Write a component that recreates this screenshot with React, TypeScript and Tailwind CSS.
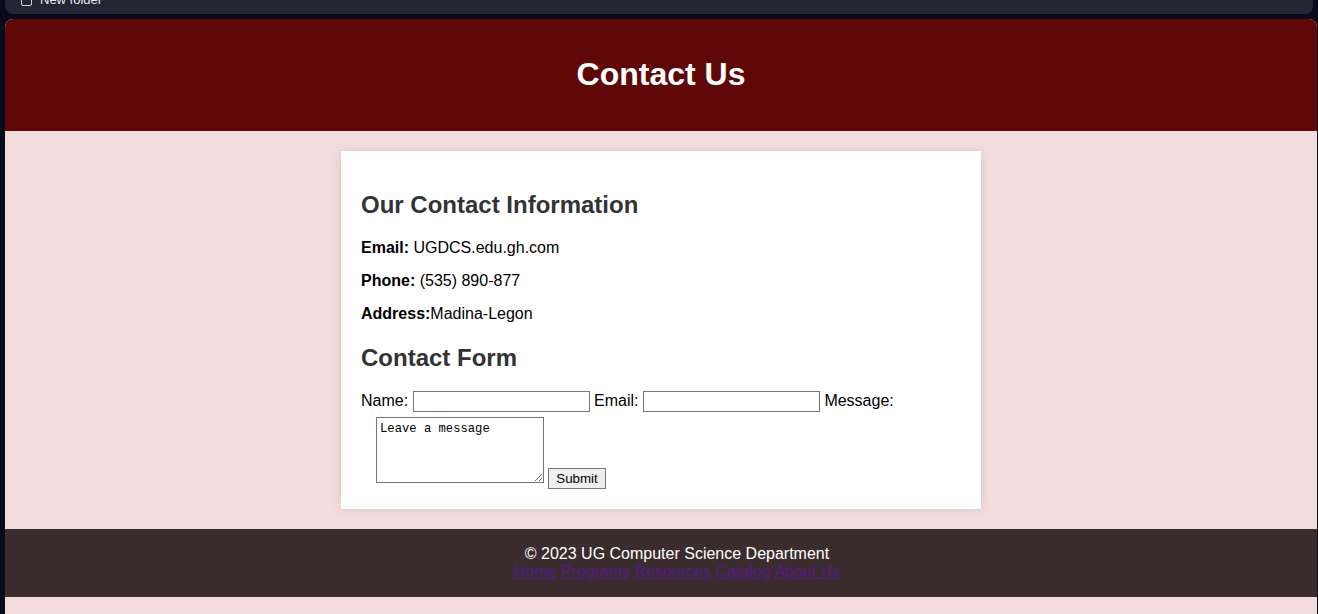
import React from 'react';

const links = ['Home', 'Programs', 'Resources', 'Catalog', 'About Us'];

function App() {
  return (
    <div className="min-h-[614px] bg-[#070b1c] font-['Liberation_Sans',Arial,sans-serif]">
      {/* folder bar from the host window, cut off at the top */}
      <div className="mx-[5px] h-[14px] overflow-hidden rounded-b-lg bg-[#222733]">
        <div className="-mt-[8px] flex items-center gap-[8px] pl-[16px] text-[13px] leading-[16px] text-[#e6e8ee]">
          <span className="inline-block h-[11px] w-[11px] rounded-[2px] border border-[#d0d3da]" />
          <span>New folder</span>
        </div>
      </div>

      <div className="ml-[5px] mr-[1px] mt-[5px] overflow-hidden rounded-t-lg bg-[#f2dcdc] pb-[17px]">
        <header className="bg-[#600808] py-[16px] text-center">
          <h1 className="mt-[20px] mb-[22px] text-[32px] font-bold leading-[38px] text-white">Contact Us</h1>
        </header>

        <main className="px-5 py-5">
          <div className="mx-auto w-[640px] bg-white p-5 shadow-[0_0_10px_rgba(0,0,0,0.1)]">
            <h2 className="mt-5 mb-5 text-[24px] font-bold leading-[28px] text-[#333]">
              Our Contact Information
            </h2>
            <p className="mb-4 text-[16px] leading-[17px] text-black">
              <strong>Email:</strong> UGDCS.edu.gh.com
            </p>
            <p className="mb-4 text-[16px] leading-[17px] text-black">
              <strong>Phone:</strong> (535) 890-877
            </p>
            <p className="text-[16px] leading-[17px] text-black">
              <strong>Address:</strong>Madina-Legon
            </p>
            <h2 className="mt-[22px] mb-[18px] text-[24px] font-bold leading-[28px] text-[#333]">
              Contact Form
            </h2>
            <form className="text-[16px] leading-[21px] text-black">
              <label>Name:</label>{' '}
              <input
                type="text"
                className="h-[21px] w-[177px] border border-[#767676] align-middle"
              />{' '}
              <label>Email:</label>{' '}
              <input
                type="email"
                className="h-[21px] w-[177px] border border-[#767676] align-middle"
              />{' '}
              <label>Message:</label>
              <div className="mt-[5px] flex items-end gap-[4px] pl-[15px]">
                <textarea
                  defaultValue="Leave a message"
                  className="h-[66px] w-[168px] resize border border-[#767676] px-[3px] pt-[3px] pb-[2px] font-['Liberation_Mono',monospace] text-[12.2px] leading-[16px] text-black"
                />
                <button
                  type="button"
                  className="-mb-[6px] h-[21px] w-[58px] border border-[#767676] bg-[#efefef] text-[13.33px] leading-[19px] text-black"
                >
                  Submit
                </button>
              </div>
              <div className="h-[6px]" />
            </form>
          </div>
        </main>

        <footer className="bg-[#3b2d2d] py-[16px] pl-[32px] text-center text-[16px] leading-[18px] text-white">
          <p>© 2023 UG Computer Science Department</p>
          <nav>
            {links.map((l, i) => (
              <React.Fragment key={l}>
                {i > 0 && ' '}
                <a href="#" className="text-[#551a8b] underline">
                  {l}
                </a>
              </React.Fragment>
            ))}
          </nav>
        </footer>
      </div>
    </div>
  );
}

export default App;
